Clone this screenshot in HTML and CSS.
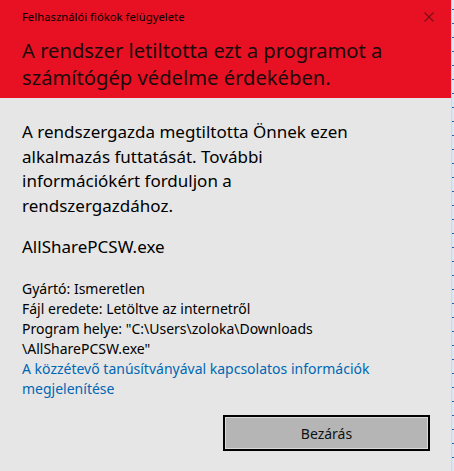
FILE: index.html
```html
<!DOCTYPE html>
<html lang="hu">
<head>
  <meta charset="UTF-8">
  <title>Felhasználói fiókok felügyelete</title>
  <link rel="stylesheet" href="styles.css">
</head>
<body>
  <div class="screen">
    <div class="dialog">
      <header class="head">
        <div class="caption">
          <span>Felhasználói fiókok felügyelete</span>
          <svg class="close" width="10" height="10" viewBox="0 0 10 10"><path d="M0.5 0.5L9.5 9.5M9.5 0.5L0.5 9.5" stroke="#7a1016" stroke-width="1.1"/></svg>
        </div>
        <h1 class="title">A rendszer letiltotta ezt a programot a számítógép védelme érdekében.</h1>
      </header>
      <main class="content">
        <p class="msg">A rendszergazda megtiltotta Önnek ezen alkalmazás futtatását. További információkért forduljon a rendszergazdához.</p>
        <p class="app">AllSharePCSW.exe</p>
        <div class="details">
          <div>Gyártó: Ismeretlen</div>
          <div>Fájl eredete: Letöltve az internetről</div>
          <div>Program helye: "C:\Users\zoloka\Downloads<br>\AllSharePCSW.exe"</div>
          <a class="link" href="#">A közzétevő tanúsítványával kapcsolatos információk megjelenítése</a>
        </div>
        <div class="actions">
          <button class="btn">Bezárás</button>
        </div>
      </main>
    </div>
    <div class="edge"></div>
  </div>
</body>
</html>
```

FILE: styles.css
```css
* { box-sizing: border-box; }
body { margin: 0; font-family: "Noto Sans", "Open Sans", sans-serif; color: #000; background: #e6e6e6; }
.screen { display: flex; height: 471px; width: 454px; overflow: hidden; }
.dialog { width: 452px; display: flex; flex-direction: column; background: #e6e6e6; border-right: 1px solid #cfd6de; }
.edge { flex: 1; background: repeating-linear-gradient(to bottom, #dbe6f3 0 9px, #2a5fa8 9px 10px, #dbe6f3 10px 14px); }

.head { background: #e81123; padding: 8px 22px 0; height: 98px; }
.caption { display: flex; justify-content: space-between; align-items: center; font-size: 11.3px; line-height: 18px; }
.close { margin-right: -5px; }
.title { margin: 11px 0 0; font-weight: normal; font-size: 20.2px; line-height: 27px; color: #1b0a0b; width: 380px; }

.content { padding: 16px 21px 0 22px; display: flex; flex-direction: column; flex: 1; }
.msg { margin: 6px 0 0; font-size: 17px; line-height: 24.5px; width: 350px; }
.app { margin: 17px 0 0; font-size: 17px; line-height: 24px; }
.details { margin-top: 20px; font-size: 14px; line-height: 20px; }
.link { display: block; color: #0066b4; text-decoration: none; width: 360px; }
.actions { display: flex; justify-content: flex-end; margin-top: 16px; }
.btn { width: 207px; height: 36px; background: #b5b5b5; border: 2px solid #000; box-shadow: inset 0 0 0 1px #d8d8d8; font: inherit; font-size: 14px; color: #111; }
```
